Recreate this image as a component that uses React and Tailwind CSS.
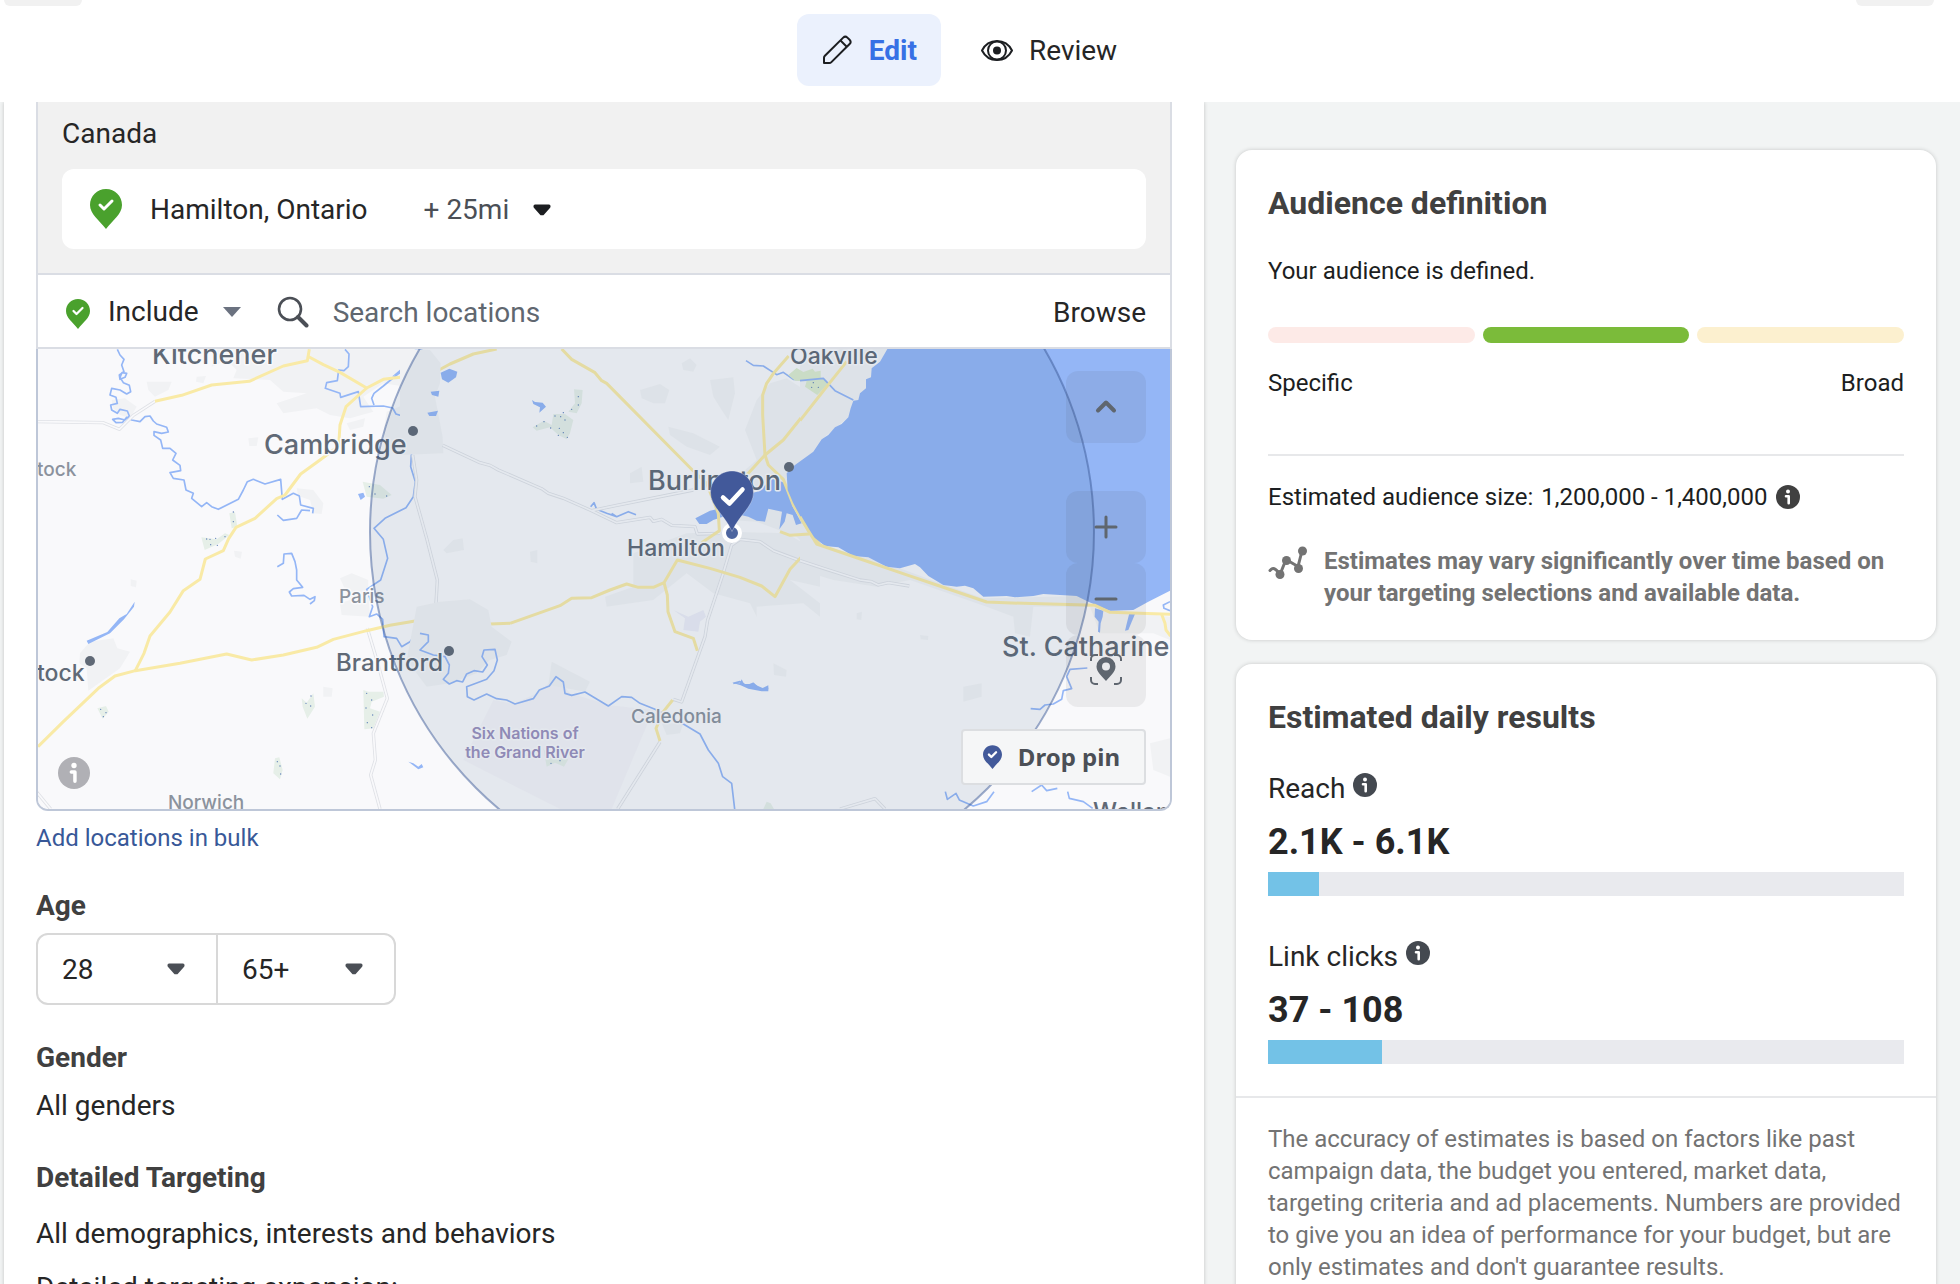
import { useState } from 'react'

// Map layers. Points are in thirds of a pixel, grouped by tile (0, 1170, 2310).
const ROADS = {
  west: [
    'M375 184L455 166L545 135L658 124L760 78L832 62L838 28',
    'M832 48L880 74L930 97L1010 144L1060 118L1110 112L1170 110L1205 102L1260 72L1330 42L1400 27',
    'M1010 144L948 200L930 255L926 318L870 360L812 402L765 465L740 476L675 535L618 562L596 596L580 632L526 657L510 718L460 752L420 816L360 888L342 940L316 992',
    'M24 1220L100 1145L205 1045L255 1008L316 992L450 970L590 942L665 960L760 945L860 922L910 898L1010 872L1080 856L1160 842L1200 848L1290 862L1360 853L1440 850',
  ],
  mid: [
    'M270 850L420 797L455 775L515 773L570 750L620 732L655 742L700 742L732 728L772 660L870 685L960 712L1025 738L1065 770L1110 688L1150 645L1185 608',
    'M425 27L455 58L525 98L545 122L560 130L820 393L860 430L895 520L898 572L845 608',
    'M732 728L742 765L744 815L765 875L820 895L832 932',
    'M1106 48L1062 98L1040 130L1028 165L1028 225L1035 345L1045 375L1090 418L1120 495L1165 570L1200 615',
    'M1200 165L1150 225L1090 300L1035 345L985 400L930 440',
    'M1080 575L1110 586L1168 582',
    'M758 1080L730 1115L708 1165L720 1203',
  ],
  east: [
    'M140 65L92 125L58 168L0 242',
    'M0 530L25 572L50 612L190 660L318 704L410 735L560 786L670 790L885 796L930 817L1110 823',
    'M1085 823L1095 850L1098 870L1112 888',
  ],
}

const MINOR = {
  west: [
    'M24 245L220 248L268 268L310 226L375 184',
    'M1148 345L1160 420L1155 470L1190 595L1222 720L1218 790L1230 850',
    'M1012 865L1042 965L1072 1075L1030 1180L1036 1260L1022 1305L1050 1407',
    'M10 1344L62 1407',
  ],
  mid: [
    'M68 316L180 368L210 376L235 390L365 446L385 460L430 475L515 512L590 548L690 532L700 544L725 538L755 556L825 560L832 582L900 580',
    'M515 512L590 496L820 450',
    'M960 598L935 615L908 705L863 840L855 890L785 1086L760 1078',
    'M960 598L1020 605L1060 632L1140 662L1200 678',
    'M720 1206L593 1407',
  ],
  east: ['M0 662L70 685L180 720L215 725L235 735L265 728L328 738', 'M120 1407L225 1376L255 1407'],
}

const RIVERS = {
  west: [
    'M262 28L270 45L282 58L275 75L282 95L268 105L270 118L285 112L290 100L276 98L270 112L280 128L298 136L302 155L290 162L270 150L245 145L240 165L258 172L262 190L242 195L245 210L262 220L270 208L292 213L298 228L285 240L265 235L248 238L258 248L278 247L290 232L305 240L330 245L345 230L360 228L370 243L380 252L410 262L415 276L395 280L372 275L372 286L392 300L398 325L420 325L438 340L428 360L450 376L452 392L420 398L430 415L462 420L468 450L490 460L485 475L515 500L530 488L545 500L565 508L625 478L640 450L652 425L670 418L705 432L752 418L757 478L790 460L808 468L812 495L850 505L848 520',
    'M742 525L760 541L800 535L815 510L840 512',
    'M742 680L760 670L762 642L785 640L795 665L800 690L800 720L818 742L790 746L778 756L785 768L822 766L840 778L855 770L853 782L840 792',
    'M945 28L957 42L955 80L942 92L926 90L922 122L890 128L886 145L930 160L932 172L985 155L992 200L1060 198L1088 204L1098 222L1130 232L1143 262L1145 330L1142 380L1156 425L1150 470L1128 503L1065 535L1032 565L1060 598L1073 655L1052 720L1010 748L1028 800L1018 830L1040 822L1058 838L1062 890L1100 895L1115 920L1140 905L1155 885L1190 882L1195 900L1172 908L1170 935L1195 942',
    'M1170 32L1140 75L1100 105L1060 138L1032 160L1025 175L1032 195',
  ],
  mid: [
    'M0 880L25 885L25 905L0 930L40 945L75 950L88 975L85 1000L70 1018L88 1032L110 1022L128 1026L140 1002L162 992L188 996L202 975L186 950L192 930L225 928L232 960L222 992L200 1018L140 1040L142 1070L162 1080L200 1062L230 1076L260 1080L285 1092L340 1076L358 1050L388 1038L408 1010L430 1026L435 1060L455 1066L495 1056L565 1098L605 1070L635 1072L660 1090L705 1108L790 1152L840 1182L865 1230L895 1270L908 1310L935 1330L944 1407',
    'M978 62L1000 76L1030 78L1070 104L1090 97L1120 118L1200 118',
    'M512 500L522 488L530 508L560 520L590 530L625 515L648 524M575 520L590 530',
    'M940 1030L960 1025L980 1038L1000 1030L1020 1048L1045 1045',
  ],
  east: [
    'M0 122L70 115L105 152L160 180',
    'M862 984L810 988L800 1010L815 1046L790 1052L785 1078L760 1092L735 1095L720 1108L692 1106',
    'M436 1355L442 1378L468 1360L478 1380L520 1398L560 1385L582 1355',
    'M695 1355L725 1335L740 1352L772 1345M803 1355L808 1375L850 1385L878 1405',
    'M1110 785L1090 795L1092 805L1110 812',
  ],
}

const WATER = {
  west: [
    'M170 902L232 876L268 835L290 822L314 785L312 800L282 838L240 880L175 912Z',
    'M984 462L1000 458L1005 470L992 480Z',
    'M1135 1265L1150 1270L1165 1280L1175 1272L1180 1282L1165 1288Z',
    'M1155 28L1178 28L1145 75L1110 100L1085 110L1130 72Z',
    'M1195 218L1210 222L1222 212L1220 225L1208 232Z',
  ],
  mid: [
    'M62 98L88 86L112 95L108 112L85 128L66 118Z',
    'M32 155L58 152L55 170L36 165Z',
    'M22 218L54 212L48 228L28 228Z',
    'M336 180L345 186L368 188L378 200L358 218L360 202L340 192Z',
    'M826 535L870 512L890 508L930 480L1010 455L1060 415L1092 428L1106 460L1118 500L1145 550L1128 555L1118 525L1100 520L1094 545L1078 568L1086 515L1045 506L1035 545L1010 542L985 530L940 520L880 540L860 552L838 552Z',
    'M936 1028L960 1030L965 1018L972 1032L1000 1032L1028 1044L1045 1036L1045 1054L1025 1054L985 1046L962 1036Z',
  ],
  east: [
    'M262 27L240 65L215 85L213 112L198 118L198 145L180 160L175 180L160 182L152 205L145 232L125 252L105 262L85 285L65 298L40 335L-15 375L-40 400L-37 450L-20 490L10 545L40 590L75 618L115 622L160 648L205 652L260 680L300 685L345 672L360 682L385 708L430 735L470 740L495 737L520 745L550 770L620 768L645 772L700 768L730 762L830 768L865 785L900 800L930 812L1000 810L1045 785L1125 745L1125 20Z',
    'M885 805L910 812L908 830L902 850L900 878L894 875L896 845L884 830Z',
    'M988 820L1005 822L985 870L975 872Z',
  ],
}

const TOWNS = {
  west: [
    'M550 28L1170 28L1200 90L1190 150L1060 130L1000 170L1030 215L960 235L900 225L860 205L760 220L740 190L830 160L760 155L720 120L610 115L620 90L590 60L545 80Z',
    'M350 125L425 125L415 150L375 170L355 150Z',
    'M500 110L528 108L520 130L498 125Z',
    'M150 940L180 905L250 895L262 925L300 935L270 985L220 1020L175 1052L170 985L148 970Z',
    'M930 715L965 700L1015 720L1015 760L1020 830L935 825L930 790L960 780Z',
    'M800 445L850 450L880 490L875 522L850 520L840 480L805 468Z',
    'M1070 215L1120 195L1190 200L1200 340L1150 325L1075 330L1060 280Z',
    'M245 180L285 175L320 200L300 235L270 225L250 205Z',
    'M655 295L685 292L680 318L658 318Z',
    'M880 1040L908 1045L905 1070L880 1070Z',
    'M612 632L636 635L632 656L615 650Z',
    'M302 718L320 722L318 742L302 738Z',
    'M950 250L1005 235L1000 260L960 270Z',
  ],
  mid: [
    'M-40 27L30 30L62 70L60 130L45 170L68 290L70 340L-60 345L-60 27Z',
    'M-10 800L60 785L150 778L205 810L215 860L275 905L260 945L210 960L170 1000L90 1030L20 1040L-40 960Z',
    'M785 70L810 55L830 75L820 95L790 90Z',
    'M660 150L720 132L748 150L735 190L700 190L665 175Z',
    'M870 120L940 112L945 160L925 240L905 210L880 170Z',
    'M630 400L665 380L670 425L630 430Z',
    'M745 260L820 280L900 320L870 345L800 320L750 285Z',
    'M1010 180L1050 130L1100 115L1200 180L1200 600L1160 620L1130 590L1010 545L930 540L940 420L1010 360L975 270Z',
    'M640 640L800 580L930 575L1100 580L1200 640L1200 740L1110 720L1200 790L1200 830L1150 790L1010 800L1010 830L990 790L880 760L800 700L700 780L560 800L555 770L640 740Z',
    'M395 965L510 1025L495 1055L385 1035Z',
    'M100 600L128 595L132 630L80 640L70 630Z',
    'M330 635L352 630L352 670L332 665Z',
    'M1060 970L1100 990L1098 1010L1062 1005Z',
    'M725 1150L790 1150L780 1180L740 1185Z',
  ],
  east: [
    'M0 60L120 27L262 27L198 145L145 232L65 298L0 368Z',
    'M0 590L80 622L220 655L400 722L550 775L840 768L880 800L700 800L690 890L645 880L640 830L560 800L330 720L230 740L100 720L0 690Z',
    'M490 1040L545 1030L545 1070L490 1085Z',
    'M870 800L1110 830L1110 900L1060 880L900 880Z',
    'M1050 1210L1110 1195L1110 1310L1060 1290Z',
    'M170 820L186 815L184 840L170 838Z',
    'M360 885L385 888L384 900L362 898Z',
  ],
}

const WOODS = {
  west: [
    'M514 592L560 598L585 580L598 585L565 612L524 630Z',
    'M598 520L615 516L622 560L605 565Z',
    'M202 1105L228 1098L236 1115L218 1136Z',
    'M815 1075L830 1088L850 1060L855 1100L832 1136L818 1100Z',
    'M1000 1050L1015 1055L1060 1055L1062 1070L1025 1085L1020 1105L1050 1115L1030 1165L1003 1168Z',
    'M735 1255L748 1252L758 1290L750 1318L730 1300Z',
    'M998 425L1050 435L1085 465L1060 476L1010 470Z',
  ],
  mid: [
    'M462 148L488 150L485 190L470 220L445 215L465 190Z',
    'M338 262L372 242L395 255L400 222L435 222L460 240L450 280L440 298L415 285L390 262L350 272Z',
    'M370 1225L385 1250L445 1258L432 1280L405 1268L380 1280Z',
    'M1040 1385L1052 1390L1062 1407L1030 1407Z',
  ],
  east: [],
}

const PARKS = {
  west: [],
  mid: [],
  east: ['M-35 105L-10 84L10 96L38 86L45 95L62 92L62 112L85 128L72 145L52 165L15 140L20 124L-15 122Z'],
}

const DOTS = {
  west: '530,597 540,598 557,595 585,590 610,516 610,545 542,614 562,616 212,1108 228,1118 220,1130 843,1068 828,1090 842,1098 1010,1060 1025,1080 1008,1104 1028,1125 1012,1148 1025,1163 742,1265 750,1278 752,1302 1018,440 1035,462 1070,468',
  mid: '475,170 475,195 455,208 430,218 405,228 422,230 435,240 372,245 350,258 392,264 418,265 430,278 415,286 442,292 393,1270 420,1262',
  east: '40,128 55,142 35,142',
}

const TILES = [
  ['west', 0],
  ['mid', 1170],
  ['east', 2310],
]

const LABELS = [
  { text: 'Kitchener', x: 152, y: 364, size: 27, color: '#606976' },
  { text: 'Cambridge', x: 264, y: 454, size: 27, color: '#606976' },
  { text: 'Burlington', x: 648, y: 490, size: 27, color: '#606976' },
  { text: 'St. Catharines', x: 1002, y: 656, size: 27, color: '#606976' },
  { text: 'Oakville', x: 790, y: 364, size: 23, color: '#606976' },
  { text: 'Hamilton', x: 627, y: 556, size: 23, color: '#606976' },
  { text: 'Brantford', x: 336, y: 671, size: 24, color: '#606976' },
  { text: 'tock', x: 37, y: 681, size: 23, color: '#606976' },
  { text: 'Welland', x: 1093, y: 820, size: 24, color: '#606976' },
  { text: 'tock', x: 37, y: 476, size: 19, color: '#8b929d' },
  { text: 'Paris', x: 339, y: 603, size: 19, color: '#8b929d' },
  { text: 'Caledonia', x: 631, y: 723, size: 19, color: '#8b929d' },
  { text: 'Norwich', x: 168, y: 809, size: 19, color: '#8b929d' },
]

const RESULTS = [
  { label: 'Reach', value: '2.1K - 6.1K', percent: 8 },
  { label: 'Link clicks', value: '37 - 108', percent: 18 },
]

function CheckPin({ className, color, check = 3 }) {
  return (
    <svg className={className} viewBox="0 0 32 40" aria-hidden="true">
      <path d="M16 0C7 0 0 7 0 16c0 9 9 15 16 24 7-9 16-15 16-24C32 7 25 0 16 0z" fill={color} />
      <path d="M10 16l4 4 8-8" fill="none" stroke="#fff" strokeWidth={check} strokeLinecap="round" strokeLinejoin="round" />
    </svg>
  )
}

function Caret({ className }) {
  return (
    <svg className={className} width="18" height="12" viewBox="0 0 18 12" aria-hidden="true">
      <path d="M2 2h14v.8L9.800 9.800H8.200L2 2.800z" fill="currentColor" stroke="currentColor" strokeWidth="3" strokeLinejoin="round" />
    </svg>
  )
}

function InfoIcon({ className }) {
  return (
    <svg className={className} viewBox="0 0 24 24" aria-hidden="true">
      <circle cx="12" cy="12" r="12" fill="currentColor" />
      <circle cx="12" cy="6.4" r="2" fill="#fff" />
      <path d="M10 11.200h2.700v7" fill="none" stroke="#fff" strokeWidth="2.6" strokeLinecap="round" strokeLinejoin="round" />
    </svg>
  )
}

function Header() {
  return (
    <header className="flex h-[102px] shrink-0 items-start justify-between bg-white pl-1 pr-[26px]">
      <span className="h-1.5 w-[78px] rounded-b-xl bg-[#f1f1f1]" />
      <nav className="mt-3.5 flex gap-4 text-[28px] leading-10">
        <button className="flex h-[72px] items-center gap-4 rounded-xl bg-[#ebf1fd] px-6 font-bold text-[#3770e5]">
          <svg className="size-8 text-[#1c1e21]" viewBox="0 0 32 32" fill="none" stroke="currentColor" strokeWidth="2" strokeLinejoin="round" aria-hidden="true">
            <path d="M3 29v-5.200c0-.8.3-1.500.9-2.100L22.200 3.600a3 3 0 0 1 4.200 0l2.200 2.200a3 3 0 0 1 0 4.200L10.400 28.100c-.6.6-1.300.9-2.100.9z" />
            <path d="M19.500 6.500l6.500 6.500" />
          </svg>
          <span className="pt-0.5">Edit</span>
        </button>
        <button className="flex h-[72px] items-center gap-4 px-6 text-[#262626]">
          <svg className="size-8 text-[#1c1e21]" viewBox="0 0 32 32" fill="none" stroke="currentColor" strokeWidth="2" aria-hidden="true">
            <path d="M1 16.500C4 10.500 9.500 7 16 7s12 3.500 15 9.500c-3 6-8.500 9.500-15 9.500S4 22.500 1 16.500z" strokeLinejoin="round" />
            <circle cx="16" cy="16.500" r="9" />
            <circle cx="16" cy="16.500" r="4" fill="currentColor" stroke="none" />
          </svg>
          <span className="pt-0.5">Review</span>
        </button>
      </nav>
      <span className="h-1.5 w-[78px] rounded-b-xl bg-[#f1f1f1]" />
    </header>
  )
}

function Terrain({ name, offset }) {
  return (
    <g transform={`translate(${offset} 0)`} fill="none" strokeLinejoin="round">
      {TOWNS[name].map(d => <path key={d} d={d} fill="#f1f2f4" />)}
      {WOODS[name].map(d => <path key={d} d={d} fill="#e6efe8" />)}
      {WATER[name].map(d => <path key={d} d={d} fill="#94b6f6" />)}
      {PARKS[name].map(d => <path key={d} d={d} fill="#dcebce" />)}
      {RIVERS[name].map(d => <path key={d} d={d} stroke="#94b6f6" strokeWidth="5" />)}
      {MINOR[name].map(d => <path key={d} d={d} stroke="#dfe1e6" strokeWidth="10" />)}
      {MINOR[name].map(d => <path key={`${d}-inner`} d={d} stroke="#f9f9fb" strokeWidth="5" />)}
      {ROADS[name].map(d => <path key={d} d={d} stroke="#f9eaa6" strokeWidth="9" />)}
      {DOTS[name].split(' ').map(p => {
        const [x, y] = p.split(',')
        return <circle key={p} cx={x} cy={y} r="2" fill="#5d7fb8" />
      })}
    </g>
  )
}

function Map() {
  return (
    <svg className="block size-full" viewBox="38 349 1132 460" preserveAspectRatio="xMidYMid slice" role="img" aria-label="Map of Hamilton, Ontario">
      <rect x="-400" y="0" width="2400" height="1200" fill="#f9f9fb" />
      <g transform="translate(30 340) scale(0.33333)">
        <path d="M1390 1080L1450 1092L1520 1060L1580 1010L1620 1060L1740 1096L1870 1110L1745 1407L1590 1407L1300 1260Z" fill="#f4f3f8" />
        {TILES.map(([name, offset]) => <Terrain key={name} name={name} offset={offset} />)}
        <path d="M1930 810L1975 830L2020 810L2028 830L2010 845L2005 875L1960 870L1965 835Z" fill="#ecedf6" />
      </g>
      <g fontFamily="Inter, sans-serif" fontWeight="500" stroke="#f9f9fb" strokeWidth="3" strokeLinejoin="round" paintOrder="stroke">
        {LABELS.map(l => (
          <text key={`${l.text}${l.y}`} x={l.x} y={l.y} fontSize={l.size} fill={l.color}>{l.text}</text>
        ))}
        <g fontSize="16" fontWeight="600" fill="#9a90bd" textAnchor="middle">
          <text x="525" y="739">Six Nations of</text>
          <text x="525" y="758">the Grand River</text>
        </g>
      </g>
      <g fill="#606976">
        <circle cx="413" cy="431" r="5" />
        <circle cx="90" cy="661" r="5" />
        <circle cx="449" cy="651" r="5" />
        <circle cx="789" cy="467" r="5" />
      </g>
      <circle cx="732" cy="532" r="362" fill="#315683" fillOpacity=".1" stroke="#3b5998" strokeOpacity=".5" strokeWidth="2" />
      <circle cx="732" cy="533" r="8" fill="#4d659f" stroke="#fff" strokeWidth="4" />
      <path d="M732 471c-12 0-21.500 9.500-21.500 21.500 0 14 14 22 21.500 39 7.500-17 21.500-25 21.500-39C753.500 480.500 744 471 732 471z" fill="#42599a" stroke="#fff" strokeOpacity=".3" />
      <path d="M723 497.500l6.500 6 13-14" fill="none" stroke="#fff" strokeWidth="4.500" strokeLinecap="round" strokeLinejoin="round" />
    </svg>
  )
}

function MapButton({ label, children }) {
  return (
    <button aria-label={label} className="flex h-[72px] w-20 items-center justify-center rounded-xl bg-[#404040]/8 text-[#5f666f]">
      <svg className="size-9" viewBox="0 0 36 36" fill="none" stroke="currentColor" strokeWidth="3" strokeLinecap="round" strokeLinejoin="round" aria-hidden="true">
        {children}
      </svg>
    </button>
  )
}

function Locations() {
  return (
    <section className="text-[28px] leading-10 text-[#262626]">
      <div className="border-x-2 border-b-2 border-[#dadde4] bg-[#f1f1f1] px-6 pb-6 pt-3">
        <h2>Canada</h2>
        <div className="mt-[15px] flex h-20 items-center rounded-xl bg-white px-7">
          <CheckPin className="h-10 w-8" color="#4aa12d" />
          <span className="ml-7 pt-0.5">Hamilton, Ontario</span>
          <button className="ml-14 flex items-center gap-6 pt-0.5 text-[#4b4f56]">
            + 25mi
            <Caret className="text-[#1c1e21]" />
          </button>
        </div>
      </div>
      <div className="flex h-[74px] items-center border-x-2 border-b-2 border-[#dadde4] bg-white pl-7 pr-6 pt-0.5">
        <button className="flex items-center">
          <CheckPin className="mt-1 h-8 w-6" color="#4aa12d" />
          <span className="ml-[18px]">Include</span>
          <svg className="ml-6" width="18" height="10" viewBox="0 0 18 10" aria-hidden="true">
            <path d="M0 0h18L9 10z" fill="#6b7280" />
          </svg>
        </button>
        <label className="ml-9 flex flex-1 items-center gap-6">
          <svg className="size-8 shrink-0" viewBox="0 0 32 32" fill="none" stroke="#4b4f56" aria-hidden="true">
            <circle cx="13" cy="13" r="11" strokeWidth="2.6" />
            <path d="M21 21l8.500 8.500" strokeWidth="4" strokeLinecap="round" />
          </svg>
          <input type="text" aria-label="Search locations" placeholder="Search locations" className="w-full min-w-0 bg-transparent pt-0.5 outline-none placeholder:text-[#606770]" />
        </label>
        <button className="pt-0.5">Browse</button>
      </div>
      <div className="relative h-[462px] overflow-hidden rounded-b-xl border-x-2 border-b-2 border-[#bec7d8]">
        <Map />
        <div className="absolute inset-0 flex flex-col justify-between px-6 pb-6 pt-[22px]">
          <div className="flex flex-col gap-12 self-end">
            <MapButton label="Collapse map">
              <path d="M10 21.500l8-8 8 8" strokeWidth="4" />
            </MapButton>
            <div className="flex flex-col">
              <MapButton label="Zoom in"><path d="M18 8v20M8 18h20" /></MapButton>
              <MapButton label="Zoom out"><path d="M8 18h20" /></MapButton>
              <MapButton label="Center on pin">
                <path d="M3 8V6a4 4 0 0 1 4-4h3M26 2h3a4 4 0 0 1 4 4v2M33 24v3a4 4 0 0 1-4 4h-3M10 31H7a4 4 0 0 1-4-4v-3" strokeWidth="2" strokeLinecap="butt" />
                <path d="M18 4a9.500 9.500 0 0 0-9.500 9.500C8.500 19 14 23 18 28c4-5 9.500-9 9.500-14.500A9.500 9.500 0 0 0 18 4zm0 5.500a4 4 0 1 1 0 8 4 4 0 0 1 0-8z" fill="currentColor" fillRule="evenodd" stroke="none" />
              </MapButton>
            </div>
          </div>
          <div className="flex items-end justify-between">
            <button aria-label="Map information" className="-mb-1 -ml-1 text-[#b0b0b5]">
              <InfoIcon className="size-8" />
            </button>
            <button className="flex h-14 items-center gap-4 rounded-sm border-2 border-[#dcdee1] bg-[#f5f6f7] pl-5 pr-6 font-['Noto_Sans',sans-serif] text-[24px] font-bold text-[#4b4f56]">
              <CheckPin className="h-6 w-[19px]" color="#42599a" check={4} />
              Drop pin
            </button>
          </div>
        </div>
      </div>
      <a href="#bulk" className="mt-[11px] block text-[24px] leading-8 text-[#385898]">Add locations in bulk</a>
    </section>
  )
}

function AgeSelect({ label, className, value, onChange, options }) {
  return (
    <div className={`relative ${className}`}>
      <select aria-label={label} value={value} onChange={e => onChange(e.target.value)} className="h-[68px] w-full appearance-none bg-transparent pl-6 pt-0.5 outline-none">
        {options.map(o => <option key={o}>{o}</option>)}
      </select>
      <Caret className="pointer-events-none absolute right-[31px] top-7 text-[#4b4f56]" />
    </div>
  )
}

function Targeting() {
  const [min, setMin] = useState('28')
  const [max, setMax] = useState('65+')

  return (
    <section className="mt-8 text-[28px] leading-10 text-[#262626]">
      <h3 className="font-bold text-[#404040]">Age</h3>
      <div className="mt-[7px] flex w-fit divide-x-2 divide-[#d8d8d8] rounded-xl border-2 border-[#d8d8d8]">
        <AgeSelect label="Minimum age" className="w-45" value={min} onChange={setMin} options={['18', '28', '38']} />
        <AgeSelect label="Maximum age" className="w-44" value={max} onChange={setMax} options={['45', '55', '65+']} />
      </div>
      <h3 className="mt-[33px] font-bold text-[#404040]">Gender</h3>
      <p className="mt-2">All genders</p>
      <h3 className="mt-8 font-bold text-[#404040]">Detailed Targeting</h3>
      <p className="mt-4">All demographics, interests and behaviors</p>
      <p className="mt-3.5">Detailed targeting expansion:</p>
    </section>
  )
}

function AudienceCard() {
  return (
    <section className="rounded-2xl bg-white px-8 pb-[31px] pt-[33px] text-[24px] leading-8 text-[#1c1e21] shadow-[0_0_4px_rgba(0,0,0,0.18)]">
      <h2 className="text-[32px] font-bold leading-10 text-[#404040]">Audience definition</h2>
      <p className="mt-8">Your audience is defined.</p>
      <div className="mt-10 flex gap-2">
        <span className="h-4 flex-1 rounded-full bg-[#fdeae7]" />
        <span className="h-4 flex-1 rounded-full bg-[#7bbb3a]" />
        <span className="h-4 flex-1 rounded-full bg-[#fcf0cf]" />
      </div>
      <div className="mt-6 flex justify-between">
        <span>Specific</span>
        <span>Broad</span>
      </div>
      <hr className="mt-[55px] border-t-2 border-[#e7e8ea]" />
      <div className="mt-[25px] flex items-center gap-2">
        <span>Estimated audience size:</span>
        <span>1,200,000 - 1,400,000</span>
        <InfoIcon className="size-6 text-[#404040]" />
      </div>
      <div className="mt-8 flex items-start gap-4 font-bold text-[#737373]">
        <svg className="size-10 shrink-0" viewBox="0 0 40 40" fill="none" stroke="currentColor" strokeWidth="3" strokeLinecap="round" strokeLinejoin="round" aria-hidden="true">
          <path d="M2 25.500c3-3 5-3 10 4l6-15 12 7L34 6" />
          <g fill="currentColor" stroke="none">
            <circle cx="12" cy="29.500" r="4.500" />
            <circle cx="18.500" cy="15.500" r="4.500" />
            <circle cx="30.500" cy="23.500" r="4.500" />
            <circle cx="34.500" cy="6" r="4.500" />
          </g>
        </svg>
        <p>Estimates may vary significantly over time based on your targeting selections and available data.</p>
      </div>
    </section>
  )
}

function ResultsCard() {
  return (
    <section className="rounded-2xl bg-white shadow-[0_0_4px_rgba(0,0,0,0.18)]">
      <div className="px-8 pb-8 pt-[33px]">
        <h2 className="text-[32px] font-bold leading-10 text-[#404040]">Estimated daily results</h2>
        <div className="mt-8 flex flex-col gap-[41px]">
          {RESULTS.map(r => (
            <div key={r.label} className="text-[#262626]">
              <h3 className="flex items-start gap-2 text-[28px] leading-10">
                {r.label}
                <InfoIcon className="mt-1 size-6 text-[#444950]" />
              </h3>
              <p className="mt-[9px] text-[36px] font-bold leading-[48px]">{r.value}</p>
              <div className="mt-1.5 h-6 bg-[#e9eaee]">
                <div className="h-full bg-[#73c2e7]" style={{ width: `${r.percent}%` }} />
              </div>
            </div>
          ))}
        </div>
      </div>
      <p className="border-t-2 border-[#e7e8ea] px-8 pb-8 pt-[25px] text-[24px] leading-8 text-[#737373]">
        The accuracy of estimates is based on factors like past campaign data, the budget you entered, market data, targeting criteria and ad placements. Numbers are provided to give you an idea of performance for your budget, but are only estimates and don't guarantee results.
      </p>
    </section>
  )
}

export default function App() {
  return (
    <div className="flex h-screen flex-col overflow-hidden bg-[#f2f4f4] font-['Roboto',sans-serif]">
      <Header />
      <div className="flex min-h-0 flex-1 overflow-hidden pl-1">
        <main className="h-fit min-h-full min-w-0 flex-1 bg-white px-8 shadow-[0_0_4px_rgba(0,0,0,0.2)]">
          <Locations />
          <Targeting />
        </main>
        <aside className="flex w-[756px] shrink-0 flex-col gap-6 pl-8 pr-6 pt-12">
          <AudienceCard />
          <ResultsCard />
        </aside>
      </div>
    </div>
  )
}
